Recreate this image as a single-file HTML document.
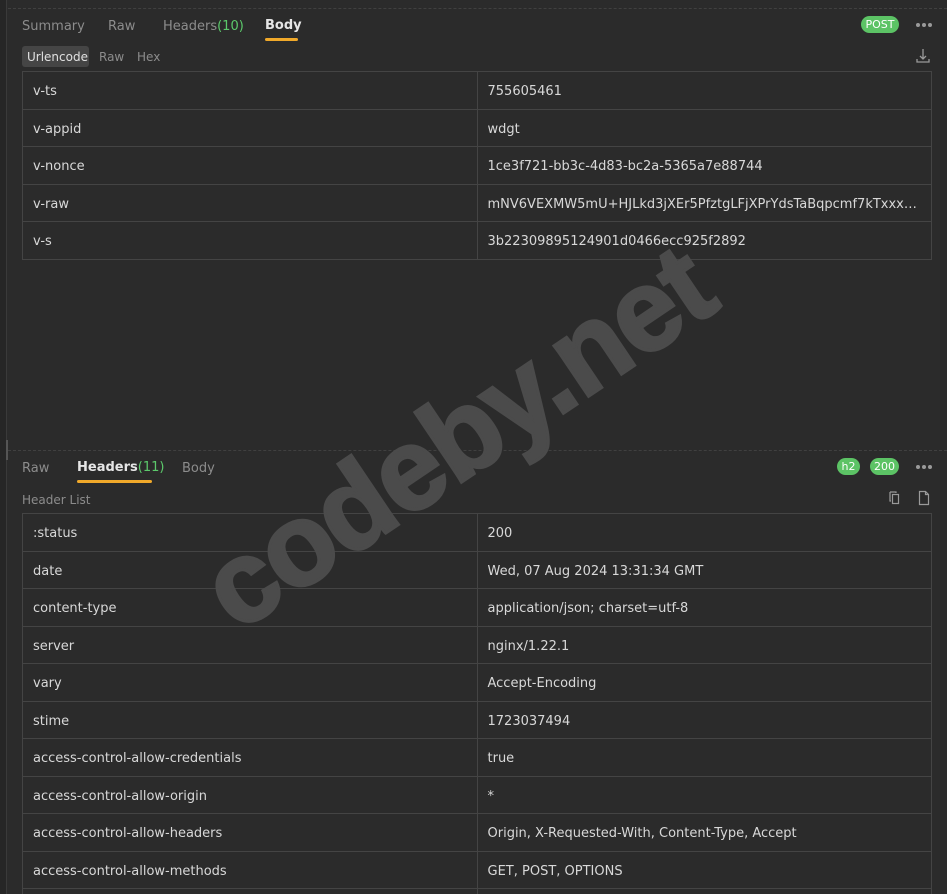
<!DOCTYPE html>
<html><head><meta charset="utf-8"><style>
*{margin:0;padding:0;box-sizing:border-box}
html,body{width:947px;height:894px;overflow:hidden}
body{background:#2b2b2b;font-family:"DejaVu Sans","Liberation Sans",sans-serif;color:#d4d4d4;position:relative;font-size:13px}
.strip{position:absolute;left:0;top:0;width:7px;height:894px;background:#262626;border-right:1px solid #3a3a3a}
.dash{position:absolute;left:8px;right:0;height:0;border-top:1px dashed #404040}
.tab{position:absolute;font-size:13px;color:#8c8c8c}
.tab.act{color:#e6e6e6;font-weight:bold}
.tab .n{color:#5cc96b;font-weight:normal}
.ul{position:absolute;height:3px;background:#f0a92a;border-radius:2px}
.pill{position:absolute;background:#5cc365;color:#fff;font-size:11px;border-radius:9px;height:17px;line-height:17px;text-align:center}
.dots{position:absolute;width:16px;height:4px}
.dots i{position:absolute;top:0;width:4px;height:4px;border-radius:2px;background:#9a9a9a}
table{position:absolute;left:22px;width:910px;border-collapse:collapse;table-layout:fixed}
td{border:1px solid #444;height:37.5px;padding:3px 10px 0;font-size:13px;color:#d8d8d8;white-space:nowrap;overflow:hidden;text-overflow:ellipsis}
.wm{position:absolute;left:165px;top:370px;font-family:"Liberation Sans",sans-serif;font-weight:bold;font-size:116px;color:#4b4b4b;transform:rotate(-34deg);transform-origin:center;white-space:nowrap;letter-spacing:-2px;-webkit-text-stroke:3px #4b4b4b}
</style></head><body>
<div class="strip"></div>
<div class="dash" style="top:8px"></div>
<div class="tab" style="left:22px;top:19px">Summary</div>
<div class="tab" style="left:108px;top:19px">Raw</div>
<div class="tab" style="left:163px;top:19px">Headers<span class="n">(10)</span></div>
<div class="tab act" style="left:265px;top:18px">Body</div>
<div class="ul" style="left:265px;top:38px;width:33px"></div>
<div class="pill" style="left:861px;top:16px;width:38px">POST</div>
<div class="dots" style="left:916px;top:23px"><i style="left:0"></i><i style="left:6px"></i><i style="left:12px"></i></div>
<svg style="position:absolute;left:915px;top:48px" width="16" height="16" viewBox="0 0 16 16"><path d="M8 1v10M5 8l3 3 3-3M2 11v3h12v-3" stroke="#9a9a9a" stroke-width="1.3" fill="none"/></svg>
<div style="position:absolute;left:22px;top:46px;width:67px;height:21px;background:#454545;border-radius:3px"></div>
<div class="tab" style="left:27px;top:50px;font-size:12px;color:#e0e0e0">Urlencode</div>
<div class="tab" style="left:99px;top:50px;font-size:12px">Raw</div>
<div class="tab" style="left:137px;top:50px;font-size:12px">Hex</div>
<table style="top:71px">
<tr><td>v-ts</td><td>755605461</td></tr>
<tr><td>v-appid</td><td>wdgt</td></tr>
<tr><td>v-nonce</td><td>1ce3f721-bb3c-4d83-bc2a-5365a7e88744</td></tr>
<tr><td>v-raw</td><td>mNV6VEXMW5mU+HJLkd3jXEr5PfztgLFjXPrYdsTaBqpcmf7kTxxxxxxxx</td></tr>
<tr><td>v-s</td><td>3b22309895124901d0466ecc925f2892</td></tr>
</table>
<div class="dash" style="top:450px"></div>
<div style="position:absolute;left:6px;top:440px;width:2px;height:20px;background:#555"></div>
<div class="tab" style="left:22px;top:461px">Raw</div>
<div class="tab act" style="left:77px;top:460px">Headers<span class="n">(11)</span></div>
<div class="ul" style="left:77px;top:480px;width:75px"></div>
<div class="tab" style="left:182px;top:461px">Body</div>
<div class="pill" style="left:837px;top:458px;width:23px">h2</div>
<div class="pill" style="left:870px;top:458px;width:29px">200</div>
<div class="dots" style="left:916px;top:465px"><i style="left:0"></i><i style="left:6px"></i><i style="left:12px"></i></div>
<div class="tab" style="left:22px;top:493px;font-size:12px">Header List</div>
<svg style="position:absolute;left:887px;top:490px" width="16" height="16" viewBox="0 0 16 16"><path d="M3 2h6v1M3 2v9h1" stroke="#9a9a9a" stroke-width="1.2" fill="none"/><rect x="5.5" y="4.5" width="6" height="9" stroke="#9a9a9a" stroke-width="1.2" fill="none"/></svg>
<svg style="position:absolute;left:916px;top:490px" width="16" height="16" viewBox="0 0 16 16"><path d="M3.5 1.5h6l3 3v10h-9z M9.5 1.5v3h3" stroke="#9a9a9a" stroke-width="1.2" fill="none"/></svg>
<table style="top:513px">
<tr><td>:status</td><td>200</td></tr>
<tr><td>date</td><td>Wed, 07 Aug 2024 13:31:34 GMT</td></tr>
<tr><td>content-type</td><td>application/json; charset=utf-8</td></tr>
<tr><td>server</td><td>nginx/1.22.1</td></tr>
<tr><td>vary</td><td>Accept-Encoding</td></tr>
<tr><td>stime</td><td>1723037494</td></tr>
<tr><td>access-control-allow-credentials</td><td>true</td></tr>
<tr><td>access-control-allow-origin</td><td>*</td></tr>
<tr><td>access-control-allow-headers</td><td>Origin, X-Requested-With, Content-Type, Accept</td></tr>
<tr><td>access-control-allow-methods</td><td>GET, POST, OPTIONS</td></tr>
<tr><td>&nbsp;</td><td>&nbsp;</td></tr>
</table>
<div class="wm">codeby.net</div>
</body></html>
